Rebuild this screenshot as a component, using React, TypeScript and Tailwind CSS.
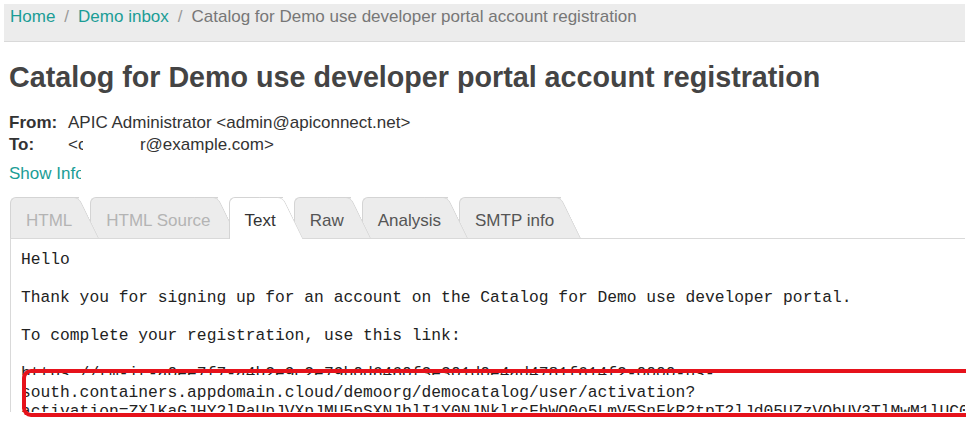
import clsx from "clsx";

const tabs = [
  { label: "HTML", state: "disabled", z: "z-[6]" },
  { label: "HTML Source", state: "disabled", z: "z-[5]" },
  { label: "Text", state: "active", z: "z-[7]" },
  { label: "Raw", state: "normal", z: "z-[4]" },
  { label: "Analysis", state: "normal", z: "z-[3]" },
  { label: "SMTP info", state: "normal", z: "z-[2]" },
];

const bodyLines = [
  "Hello",
  "",
  "Thank you for signing up for an account on the Catalog for Demo use developer portal.",
  "",
  "To complete your registration, use this link:",
  "",
];

function Tab({ label, state, z }: { label: string; state: string; z: string }) {
  const active = state === "active";
  const bg = active ? "bg-white" : "bg-[#ececec]";
  return (
    <div
      className={clsx(
        "relative flex items-center pl-4 pr-[18px] pt-[6px] text-[17px]",
        z,
        active ? "-mb-px h-[42px] text-[#333]" : "h-[41px]",
        state === "disabled" && "text-[#b4b4b4]",
        state === "normal" && "text-[#555]"
      )}
    >
      <div className={clsx("absolute inset-y-0 left-0 right-[11px] rounded-tl-[6px] border-l border-t border-[#d4d4d4]", bg)} />
      <div
        className={clsx(
          "absolute inset-y-0 right-[11px] w-[24px] origin-top skew-x-[26deg] rounded-tr-[6px] border-r border-t border-[#d4d4d4]",
          bg
        )}
      />
      <span className="relative whitespace-nowrap">{label}</span>
    </div>
  );
}

export default function App() {
  return (
    <div className="relative h-[426px] w-[975px] overflow-hidden bg-white font-['Liberation_Sans',Arial,sans-serif]">
      <div className="ml-[4px] w-[961px] pt-[4px]">
        {/* breadcrumb */}
        <div className="h-[38px] border-b border-[#d9d9d9] bg-[#ececec] pl-[6px] pt-[1px] text-[17px] leading-[24px]">
          <a className="text-[#1b9d96]">Home</a>
          <span className="px-[9px] text-[#999]">/</span>
          <a className="text-[#1b9d96]">Demo inbox</a>
          <span className="px-[9px] text-[#999]">/</span>
          <span className="text-[#777]">Catalog for Demo use developer portal account registration</span>
        </div>

        <div className="pl-[5px]">
          <h1 className="mt-[18px] text-[28.7px] font-bold leading-[34px] text-[#444]">
            Catalog for Demo use developer portal account registration
          </h1>

          <div className="mt-[18px] text-[17px] leading-[22px] text-[#333]">
            <div className="flex">
              <span className="w-[59px] font-bold">From:</span>
              <span>APIC Administrator &lt;admin@apiconnect.net&gt;</span>
            </div>
            <div className="flex">
              <span className="w-[59px] font-bold">To:</span>
              <span>&lt;</span>
              <span className="inline-block w-[5px] overflow-hidden">c</span>
              <span className="ml-[57px]">r@example.com&gt;</span>
            </div>
          </div>

          <div className="mt-[7px] text-[17px] leading-[22px]">
            <span className="inline-block w-[72px] overflow-hidden whitespace-nowrap align-top text-[#1b9d96]">
              Show Info
            </span>
          </div>
        </div>

        {/* tabs */}
        <div className="ml-[6px] mt-[12px]">
          <div className="relative z-10 flex items-end">
            {tabs.map((t) => (
              <Tab key={t.label} {...t} />
            ))}
          </div>
          <div className="h-[174px] overflow-hidden border-l border-t border-[#d9d9d9] pl-[10px] pt-[11px] font-['Liberation_Mono',monospace] text-[16.3px] leading-[19px] text-[#222]">
            {bodyLines.map((l, i) => (
              <div key={i} className="h-[19px] whitespace-pre">
                {l}
              </div>
            ))}
            <div className="h-[19px]">
              <div className="h-[11px] overflow-hidden whitespace-pre">
                https://rm-ir-a0ee7f7-a4b2e9c2e79b0d6460f3e301d0e4ad4781f614f2-0000-us-
              </div>
            </div>
            <div className="h-[19px] whitespace-pre">
              south.containers.appdomain.cloud/demoorg/democatalog/user/activation?
            </div>
            <div className="h-[19px] whitespace-pre">
              activation=ZXlKaGJHY2lPaUpJVXpJMU5pSXNJblI1Y0NJNklrcFhWQ0o5LmV5SnFkR2tpT2lJd05UZzVObUV3TlMwM1lUC00ZGJi
            </div>
          </div>
        </div>
      </div>

      {/* annotation */}
      <div className="absolute left-[22px] top-[369px] h-[48px] w-[944px] rounded-l-[9px] border-4 border-r-0 border-[#e6121b]" />
    </div>
  );
}
